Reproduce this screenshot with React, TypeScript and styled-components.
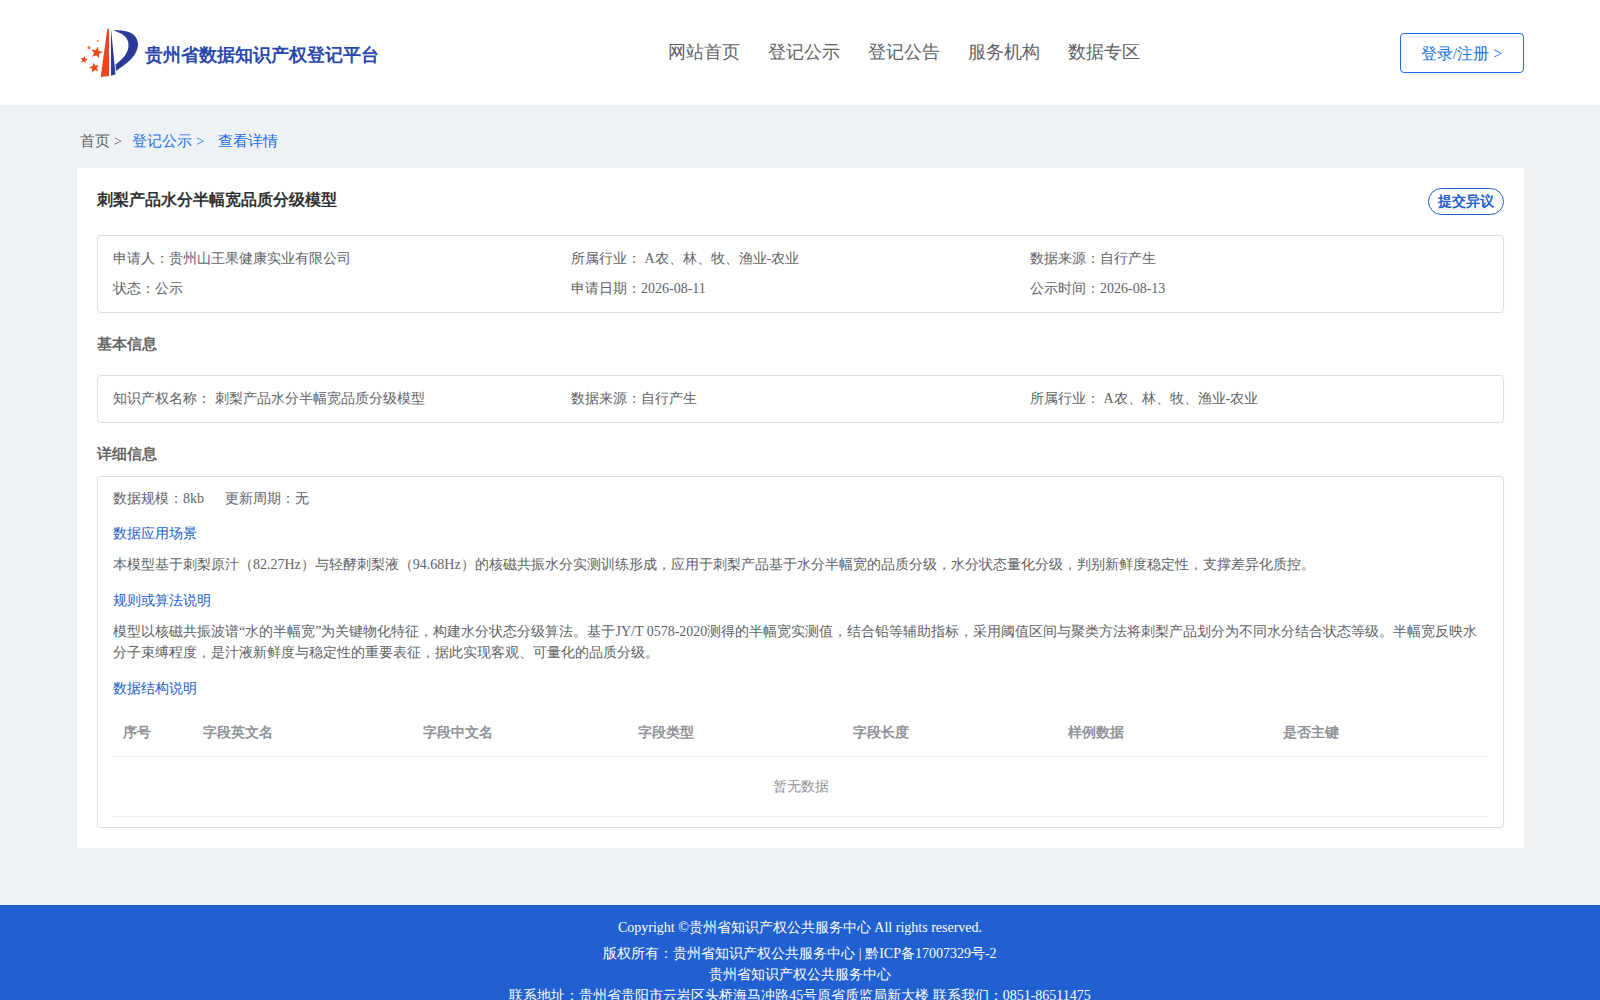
import React from "react";
import styled, { createGlobalStyle } from "styled-components";

const Global = createGlobalStyle`
  html, body { margin: 0; padding: 0; background: #eff2f5; }
  body { font-family: "Liberation Serif", serif; font-size: 14px; color: #606266; }
  * { box-sizing: border-box; }
`;

const Header = styled.header`
  height: 105px;
  background: #fff;
  padding: 0 76px 0 80px;
  display: grid;
  grid-template-columns: 588px 1fr auto;
  align-items: center;
`;
const Brand = styled.div`
  display: flex;
  align-items: center;
  gap: 7px;
`;
const BrandName = styled.span`
  font-size: 18px;
  font-weight: 700;
  color: #2a47ae;
  margin-top: 5px;
`;
const Nav = styled.nav`
  display: flex;
  gap: 28px;
  margin-bottom: 2px;
`;
const NavItem = styled.a`
  font-size: 18px;
  line-height: 26px;
  color: #606266;
`;
const LoginButton = styled.button`
  width: 124px;
  height: 40px;
  border: 1px solid #1a6fe8;
  border-radius: 4px;
  background: #fff;
  color: #1a6fe8;
  font: inherit;
  font-size: 16px;
  padding: 3px 1px 0 0;
`;
const Main = styled.main`
  padding: 0 76px 0 77px;
`;
const Crumbs = styled.div`
  height: 63px;
  padding: 26px 3px 0;
  line-height: 20px;
  font-size: 15px;
  display: flex;
`;
const Crumb = styled.span<{ $active?: boolean; $gap: number }>`
  color: ${(p) => (p.$active ? "#1a6fe8" : "#606266")};
  margin-right: ${(p) => p.$gap}px;
`;
const Card = styled.section`
  background: #fff;
  padding: 20px 20px 19.5px;
`;
const TitleRow = styled.div`
  display: flex;
  justify-content: space-between;
  align-items: flex-start;
  height: 47px;
`;
const Title = styled.h1`
  margin: 0;
  font-size: 16px;
  line-height: 24px;
  font-weight: 700;
  color: #303133;
`;
const ObjectionButton = styled.button`
  width: 76px;
  height: 27px;
  border: 1px solid #2060cc;
  border-radius: 13.5px;
  background: #fff;
  color: #2060cc;
  font: inherit;
  font-size: 14px;
  font-weight: 700;
  padding: 0;
`;
const Box = styled.div<{ $pad: string }>`
  border: 1px solid #dcdfe6;
  border-radius: 4px;
  padding: ${(p) => p.$pad};
  box-shadow: 0 0 2px rgba(0, 0, 0, 0.04);
`;
const InfoGrid = styled.div`
  display: grid;
  grid-template-columns: 458px 459px 1fr;
  grid-auto-rows: 30px;
  align-items: center;
`;
const InfoCell = styled.div`
  line-height: 20px;
`;
const SectionHead = styled.h2<{ $h: number; $top: number }>`
  margin: 0;
  height: ${(p) => p.$h}px;
  padding-top: ${(p) => p.$top}px;
  font-size: 15px;
  font-weight: 700;
  color: #666;
  display: flex;
  align-items: center;
`;
const Stats = styled.div`
  display: flex;
  gap: 21px;
  line-height: 20px;
`;
const SubHead = styled.div<{ $mt: number }>`
  color: #2060cc;
  line-height: 20px;
  margin-top: ${(p) => p.$mt}px;
`;
const Para = styled.p<{ $mt: number }>`
  margin: ${(p) => p.$mt}px 0 0;
  line-height: 21px;
`;
const Table = styled.div`
  margin-top: 8.5px;
`;
const TableHead = styled.div`
  display: grid;
  grid-template-columns: 80px 220px 215px 215px 215px 215px 1fr;
  height: 49.5px;
  padding-top: 2px;
  align-items: center;
  border-bottom: 1px solid #ebeef5;
  color: #909399;
  font-weight: 700;
`;
const HeadCell = styled.div`
  padding-left: 10px;
`;
const Empty = styled.div`
  height: 59.5px;
  padding-top: 2px;
  display: flex;
  align-items: center;
  justify-content: center;
  color: #909399;
  border-bottom: 1px solid #ebeef5;
`;
const Footer = styled.footer`
  margin-top: 57px;
  background: #2060d0;
  color: #fff;
  text-align: center;
  padding: 12.5px 0 12px;
`;
const FooterLine = styled.div<{ $mb?: number }>`
  line-height: 21px;
  margin-bottom: ${(p) => p.$mb ?? 0}px;
`;

const starPoints = (cx: number, cy: number, r: number, rot: number) =>
  Array.from({ length: 10 }, (_, i) => {
    const radius = i % 2 === 0 ? r : r * 0.42;
    const a = ((rot + i * 36 - 90) * Math.PI) / 180;
    return `${(cx + radius * Math.cos(a)).toFixed(2)},${(cy + radius * Math.sin(a)).toFixed(2)}`;
  }).join(" ");

const Logo = () => (
  <svg width="58" height="50" viewBox="0 0 58 50" aria-hidden="true">
    <path d="M20.7 49 L27.3 1 L29 0.5 L29 48 Z" fill="#e8481c" />
    <path d="M31 1 L31 47.5 L35.5 46.5 Z" fill="#2a3a96" />
    <path d="M33 2.5 C47 1 58 6 58 16 C58 28 46 36 36 43 L35.5 36.5 C43 31 48.5 25 48.5 17 C48.5 9 42 5 33 2.5 Z" fill="#2a3a96" />
    <polygon points={starPoints(16.7, 24.7, 6.2, 12)} fill="#e8481c" />
    <polygon points={starPoints(14.3, 39.7, 5.4, -12)} fill="#e8481c" />
    <polygon points={starPoints(4, 31.7, 3.9, 10)} fill="#e8481c" />
    <circle cx="9" cy="19.7" r="1.6" fill="#ee7a50" />
    <circle cx="17.7" cy="13" r="1.1" fill="#f09070" />
  </svg>
);

const heads = ["序号", "字段英文名", "字段中文名", "字段类型", "字段长度", "样例数据", "是否主键"];

export default function App() {
  return (
    <>
      <Global />
      <Header>
        <Brand>
          <Logo />
          <BrandName>贵州省数据知识产权登记平台</BrandName>
        </Brand>
        <Nav>
          {["网站首页", "登记公示", "登记公告", "服务机构", "数据专区"].map((n) => (
            <NavItem key={n}>{n}</NavItem>
          ))}
        </Nav>
        <LoginButton>登录/注册 &gt;</LoginButton>
      </Header>
      <Main>
        <Crumbs>
          <Crumb $gap={10}>首页 &gt;</Crumb>
          <Crumb $active $gap={13.5}>登记公示 &gt;</Crumb>
          <Crumb $active $gap={0}>查看详情</Crumb>
        </Crumbs>
        <Card>
          <TitleRow>
            <Title>刺梨产品水分半幅宽品质分级模型</Title>
            <ObjectionButton>提交异议</ObjectionButton>
          </TitleRow>
          <Box $pad="8px 15px 8px">
            <InfoGrid>
              <InfoCell>申请人：贵州山王果健康实业有限公司</InfoCell>
              <InfoCell>所属行业： A农、林、牧、渔业-农业</InfoCell>
              <InfoCell>数据来源：自行产生</InfoCell>
              <InfoCell>状态：公示</InfoCell>
              <InfoCell>申请日期：2026-08-11</InfoCell>
              <InfoCell>公示时间：2026-08-13</InfoCell>
            </InfoGrid>
          </Box>
          <SectionHead $h={62} $top={0}>基本信息</SectionHead>
          <Box $pad="8px 15px 8px">
            <InfoGrid>
              <InfoCell>知识产权名称： 刺梨产品水分半幅宽品质分级模型</InfoCell>
              <InfoCell>数据来源：自行产生</InfoCell>
              <InfoCell>所属行业： A农、林、牧、渔业-农业</InfoCell>
            </InfoGrid>
          </Box>
          <SectionHead $h={53} $top={9}>详细信息</SectionHead>
          <Box $pad="11.5px 15px 10.5px">
            <Stats>
              <span>数据规模：8kb</span>
              <span>更新周期：无</span>
            </Stats>
            <SubHead $mt={15.5}>数据应用场景</SubHead>
            <Para $mt={9.5}>本模型基于刺梨原汁（82.27Hz）与轻酵刺梨液（94.68Hz）的核磁共振水分实测训练形成，应用于刺梨产品基于水分半幅宽的品质分级，水分状态量化分级，判别新鲜度稳定性，支撑差异化质控。</Para>
            <SubHead $mt={16}>规则或算法说明</SubHead>
            <Para $mt={10.5}>模型以核磁共振波谱“水的半幅宽”为关键物化特征，构建水分状态分级算法。基于JY/T 0578-2020测得的半幅宽实测值，结合铅等辅助指标，采用阈值区间与聚类方法将刺梨产品划分为不同水分结合状态等级。半幅宽反映水分子束缚程度，是汁液新鲜度与稳定性的重要表征，据此实现客观、可量化的品质分级。</Para>
            <SubHead $mt={16}>数据结构说明</SubHead>
            <Table>
              <TableHead>
                {heads.map((h) => (
                  <HeadCell key={h}>{h}</HeadCell>
                ))}
              </TableHead>
              <Empty>暂无数据</Empty>
            </Table>
          </Box>
        </Card>
      </Main>
      <Footer>
        <FooterLine $mb={5}>Copyright ©贵州省知识产权公共服务中心 All rights reserved.</FooterLine>
        <FooterLine>版权所有：贵州省知识产权公共服务中心 | 黔ICP备17007329号-2</FooterLine>
        <FooterLine>贵州省知识产权公共服务中心</FooterLine>
        <FooterLine>联系地址：贵州省贵阳市云岩区头桥海马冲路45号原省质监局新大楼 联系我们：0851-86511475</FooterLine>
      </Footer>
    </>
  );
}
